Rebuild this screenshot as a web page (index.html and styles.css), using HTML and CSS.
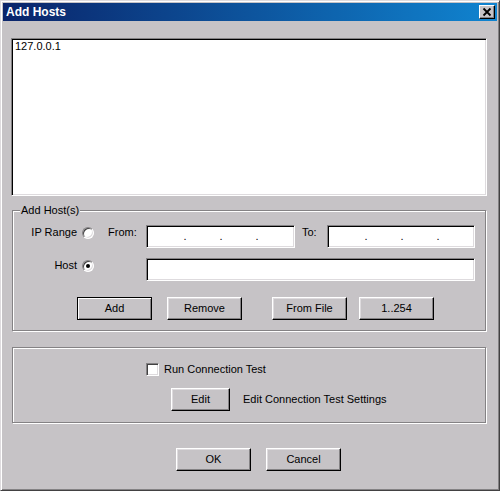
FILE: index.html
```html
<!DOCTYPE html>
<html>
<head>
<meta charset="utf-8">
<title>Add Hosts</title>
<link rel="stylesheet" href="styles.css">
</head>
<body>
<div class="window">
  <div class="titlebar">
    <span class="title">Add Hosts</span>
    <span class="close">
      <svg width="14" height="12" viewBox="0 0 14 12"><path d="M3.5 2.5 L10.5 9.5 M10.5 2.5 L3.5 9.5" stroke="#000" stroke-width="1.8" fill="none"/></svg>
    </span>
  </div>
  <div class="content">
    <div class="listbox"><div class="item">127.0.0.1</div></div>

    <div class="group hosts">
      <span class="legend">Add Host(s)</span>
      <div class="row">
        <span class="lbl">IP Range</span>
        <span class="radio"></span>
        <span class="from-lbl">From:</span>
        <div class="field ip ip-from">
          <span class="seg"></span><span class="dot">.</span><span class="seg"></span><span class="dot">.</span><span class="seg"></span><span class="dot">.</span><span class="seg"></span>
        </div>
        <span class="to-lbl">To:</span>
        <div class="field ip ip-to">
          <span class="seg"></span><span class="dot">.</span><span class="seg"></span><span class="dot">.</span><span class="seg"></span><span class="dot">.</span><span class="seg"></span>
        </div>
      </div>
      <div class="row row2">
        <span class="lbl">Host</span>
        <span class="radio on"></span>
        <div class="field host"></div>
      </div>
      <div class="btnrow">
        <div class="btn default">Add</div>
        <div class="btn gap15">Remove</div>
        <div class="btn gap30">From File</div>
        <div class="btn gap12">1..254</div>
      </div>
    </div>

    <div class="group test">
      <div class="checkrow">
        <span class="check"></span>
        <span class="checktext">Run Connection Test</span>
      </div>
      <div class="editrow">
        <div class="btn edit">Edit</div>
        <span class="edittext">Edit Connection Test Settings</span>
      </div>
    </div>

    <div class="actions">
      <div class="btn">OK</div>
      <div class="btn gap15">Cancel</div>
    </div>
  </div>
</div>
</body>
</html>
```
FILE: styles.css
```css
body {
  margin: 0;
  font-family: "Liberation Sans", Arial, sans-serif;
  font-size: 11px;
  line-height: 13px;
  color: #000;
  background: #c6c3c6;
}

.window {
  width: 500px;
  height: 491px;
  box-sizing: border-box;
  background: #c6c3c6;
  border: 1px solid;
  border-color: #dedbde #424142 #424142 #dedbde;
  box-shadow: inset 1px 1px #fff, inset -1px -1px #848284;
  padding: 2px;
  display: flex;
  flex-direction: column;
}

.titlebar {
  height: 18px;
  flex: none;
  background: linear-gradient(to right, #0a246a, #1084d0);
  display: flex;
  align-items: center;
  justify-content: space-between;
  padding-left: 3px;
}

.title {
  color: #fff;
  font-weight: bold;
  font-size: 12px;
  line-height: 18px;
}

.close {
  width: 16px;
  height: 14px;
  box-sizing: border-box;
  margin-right: 2px;
  background: #c6c3c6;
  border: 1px solid;
  border-color: #fff #000 #000 #fff;
  box-shadow: inset -1px -1px #848284;
  display: flex;
  align-items: center;
  justify-content: center;
}

.close svg {
  display: block;
}

.content {
  padding: 17px 10px 0 8px;
}

.sunken,
.listbox,
.field {
  background: #fff;
  border: 1px solid;
  border-color: #848284 #fff #fff #848284;
  box-shadow: inset 1px 1px #000, inset -1px -1px #dedbde;
  box-sizing: border-box;
}

.listbox {
  height: 158px;
  padding: 1px 3px;
}

.group {
  position: relative;
  margin: 0 1px;
  border: 1px solid #848284;
  box-shadow: inset 1px 1px #fff, 1px 1px #fff;
}

.legend {
  position: absolute;
  top: -7px;
  left: 7px;
  padding: 0 1px;
  background: #c6c3c6;
  line-height: 13px;
}

.hosts {
  margin-top: 14px;
  padding: 14px 0 10px 0;
}

.row {
  display: flex;
  align-items: flex-start;
  height: 23px;
}

.row2 {
  margin-top: 10px;
}

.lbl {
  width: 64px;
  text-align: right;
  margin-top: 1px;
}

.radio {
  position: relative;
  width: 12px;
  height: 12px;
  box-sizing: border-box;
  margin-left: 5px;
  margin-top: 2px;
  border-radius: 50%;
  background: #fff;
  border: 1px solid;
  border-color: #848284 #fff #fff #848284;
  box-shadow: inset 1px 1px #424142, inset -1px -1px #dedbde;
}

.radio.on::after {
  content: "";
  position: absolute;
  left: 3px;
  top: 3px;
  width: 4px;
  height: 4px;
  border-radius: 50%;
  background: #000;
}

.from-lbl {
  width: 38px;
  margin-left: 14px;
  margin-top: 1px;
}

.to-lbl {
  width: 25px;
  margin-left: 7px;
  margin-top: 1px;
}

.field {
  height: 23px;
}

.ip {
  display: flex;
  align-items: center;
  padding-left: 4px;
}

.ip-from {
  width: 149px;
}

.ip-to {
  width: 148px;
}

.seg {
  width: 32px;
}

.dot {
  width: 4px;
  text-align: center;
}

.host {
  width: 329px;
  margin-left: 52px;
}

.btnrow {
  display: flex;
  margin-top: 16px;
  padding-left: 64px;
}

.btn {
  width: 75px;
  height: 23px;
  box-sizing: border-box;
  display: flex;
  align-items: center;
  justify-content: center;
  padding-bottom: 1px;
  background: #c6c3c6;
  border: 1px solid;
  border-color: #fff #000 #000 #fff;
  box-shadow: inset -1px -1px #848284, inset 1px 1px #dedbde;
}

.btn.default {
  border-color: #000;
  box-shadow: inset 1px 1px #fff, inset -1px -1px #848284;
}

.gap15 {
  margin-left: 15px;
}

.gap30 {
  margin-left: 30px;
}

.gap12 {
  margin-left: 12px;
}

.test {
  margin-top: 16px;
  padding: 15px 0 11px 0;
}

.checkrow {
  display: flex;
  align-items: center;
  height: 13px;
  padding-left: 133px;
}

.check {
  width: 13px;
  height: 13px;
  box-sizing: border-box;
  background: #fff;
  border: 1px solid;
  border-color: #848284 #fff #fff #848284;
  box-shadow: inset 1px 1px #424142, inset -1px -1px #dedbde;
}

.checktext {
  margin-left: 5px;
}

.editrow {
  display: flex;
  align-items: center;
  margin-top: 12px;
  padding-left: 158px;
}

.btn.edit {
  width: 59px;
}

.edittext {
  margin-left: 13px;
}

.actions {
  display: flex;
  margin-top: 25px;
  padding-left: 165px;
}
```
